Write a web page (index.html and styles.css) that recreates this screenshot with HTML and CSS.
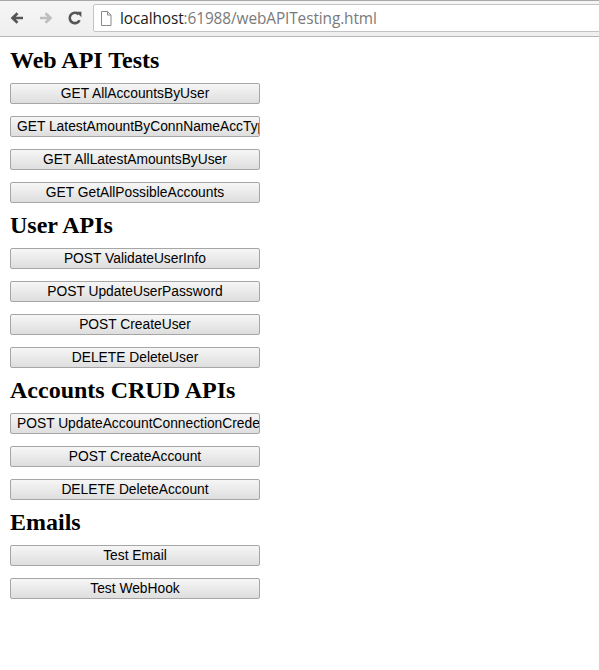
FILE: index.html
```html
<!DOCTYPE html>
<html>
<head>
<meta charset="utf-8">
<link rel="stylesheet" href="styles.css">
</head>
<body>
<div class="chrome">
  <div class="nav">
    <svg class="ico back" width="16" height="16" viewBox="0 0 16 16"><path d="M14 8H4M8.5 3.2L3.5 8l5 4.8" fill="none" stroke="#555" stroke-width="2.6" stroke-linecap="butt" stroke-linejoin="miter"/></svg>
    <svg class="ico fwd" width="16" height="16" viewBox="0 0 16 16"><path d="M2 8h10M7.5 3.2L12.5 8l-5 4.8" fill="none" stroke="#bdbdbd" stroke-width="2.6" stroke-linejoin="miter"/></svg>
    <svg class="ico reload" width="16" height="16" viewBox="0 0 16 16"><path d="M12.6 10.2A5.2 5.2 0 1 1 11.6 4.3" fill="none" stroke="#555" stroke-width="2.6"/><path d="M9 1.8h5.4v5.4z" fill="#555"/></svg>
  </div>
  <div class="omnibox">
    <svg class="page" width="12" height="15" viewBox="0 0 12 15"><path d="M1.5 0.5h6l3.5 3.5v10.5h-9.5z M7.5 0.5v3.5h3.5" fill="#fff" stroke="#8a8a8a" stroke-width="1"/></svg>
    <span class="url"><span class="host">localhost</span>:61988/webAPITesting.html</span>
  </div>
</div>
<main class="content">
  <h2>Web API Tests</h2>
  <div class="group">
    <button class="btn">GET AllAccountsByUser</button>
    <button class="btn">GET LatestAmountByConnNameAccType</button>
    <button class="btn">GET AllLatestAmountsByUser</button>
    <button class="btn">GET GetAllPossibleAccounts</button>
  </div>
  <h2>User APIs</h2>
  <div class="group">
    <button class="btn">POST ValidateUserInfo</button>
    <button class="btn">POST UpdateUserPassword</button>
    <button class="btn">POST CreateUser</button>
    <button class="btn">DELETE DeleteUser</button>
  </div>
  <h2>Accounts CRUD APIs</h2>
  <div class="group">
    <button class="btn">POST UpdateAccountConnectionCredentials</button>
    <button class="btn">POST CreateAccount</button>
    <button class="btn">DELETE DeleteAccount</button>
  </div>
  <h2>Emails</h2>
  <div class="group">
    <button class="btn">Test Email</button>
    <button class="btn">Test WebHook</button>
  </div>
</main>
</body>
</html>
```
FILE: styles.css
```css
html, body {
  margin: 0;
  padding: 0;
  background: #fff;
}
body {
  font-family: "Liberation Serif", "Times New Roman", serif;
  overflow: hidden;
}
.chrome {
  box-sizing: border-box;
  height: 37px;
  background: linear-gradient(#f5f5f5, #efefef);
  border-top: 1px solid #a8a8a8;
  border-bottom: 1px solid #b4b4b4;
  display: flex;
  align-items: flex-start;
  overflow: hidden;
}
.nav {
  display: flex;
  align-items: center;
  height: 30px;
  padding-left: 9px;
  gap: 13px;
  margin-top: 2px;
}
.omnibox {
  flex: 0 0 auto;
  width: 540px;
  margin-left: 10px;
  margin-top: 3px;
  box-sizing: border-box;
  height: 28px;
  background: #fff;
  border: 1px solid #c3c3c3;
  border-radius: 2px;
  display: flex;
  align-items: center;
  padding-left: 6px;
  gap: 8px;
}
.page { flex: 0 0 auto; margin-top: 1px; }
.url {
  font-family: "Open Sans", "Liberation Sans", Arial, sans-serif;
  font-size: 15.4px;
  color: #7a7a7a;
  white-space: nowrap;
  letter-spacing: -0.1px;
}
.host { color: #1a1a1a; }
.content {
  padding: 1px 10px 0;
  display: flex;
  flex-direction: column;
  align-items: flex-start;
}
h2 {
  font-size: 24px;
  font-weight: bold;
  line-height: 28px;
  margin: 8px 0 9px;
  color: #000;
}
.group {
  display: flex;
  flex-direction: column;
  gap: 12px;
}
.btn {
  box-sizing: border-box;
  width: 250px;
  height: 21px;
  padding: 0 6px;
  margin: 0;
  font-family: "Liberation Sans", Arial, sans-serif;
  font-size: 13.8px;
  color: #000;
  background: linear-gradient(#f6f6f6, #dedede);
  border: 1px solid #a6a6a6;
  border-radius: 2px;
  white-space: nowrap;
  overflow: hidden;
  text-align: center;
  line-height: 18px;
}
```
